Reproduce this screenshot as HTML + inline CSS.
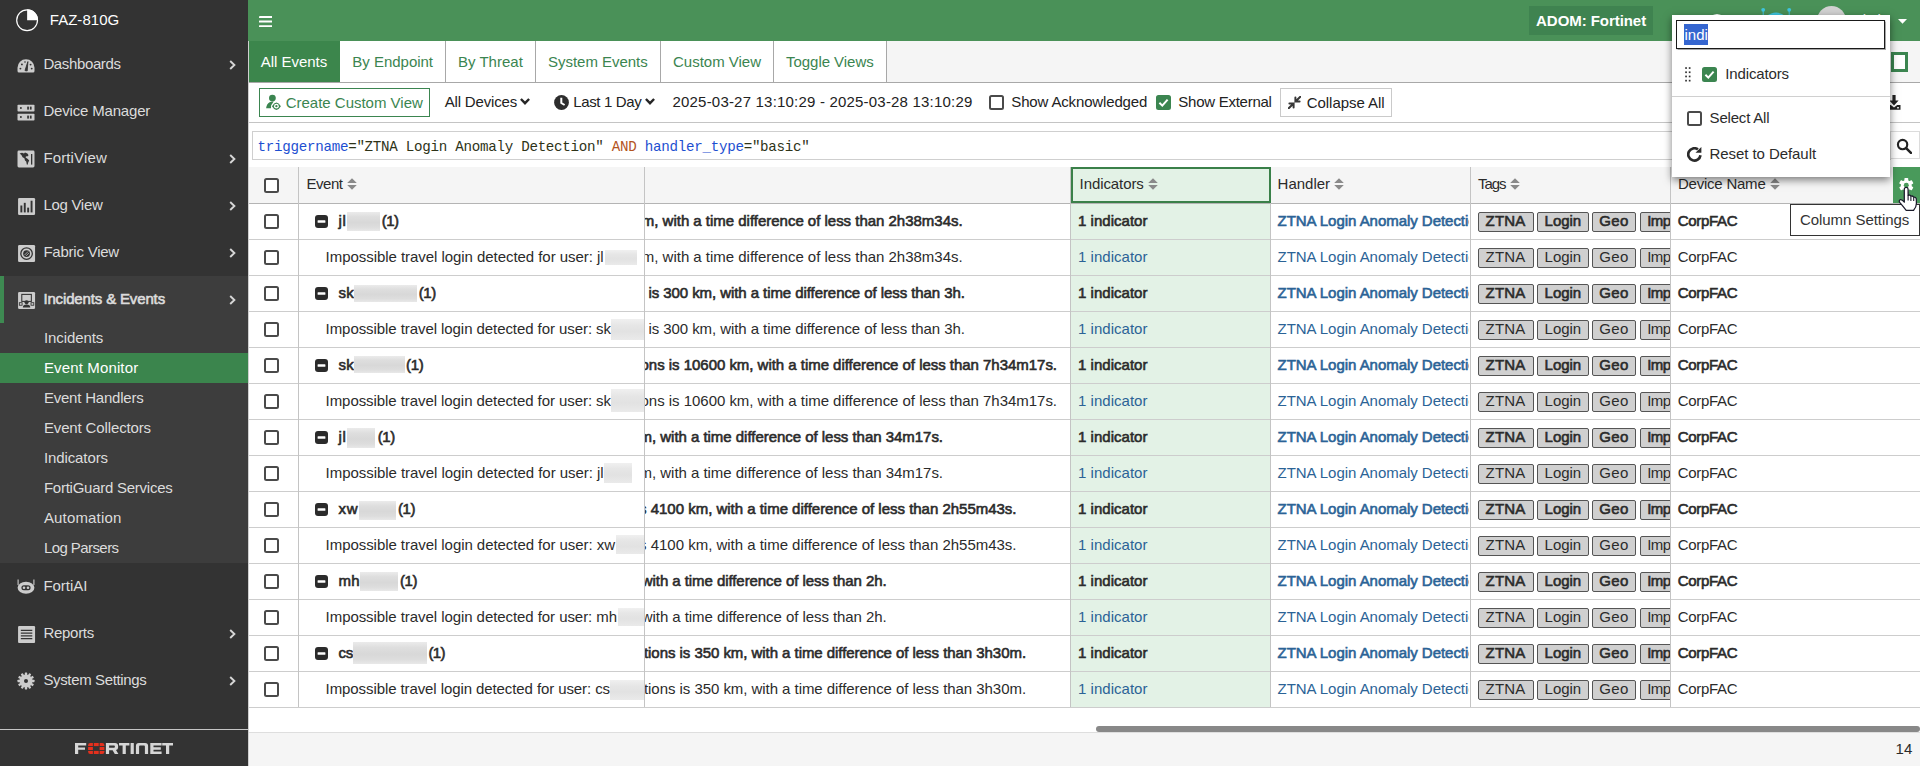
<!DOCTYPE html>
<html>
<head>
<meta charset="utf-8">
<title>FortiAnalyzer - Event Monitor</title>
<style>
*{box-sizing:border-box;}
html,body{margin:0;padding:0;}
body{width:1920px;height:766px;overflow:hidden;position:relative;background:#fff;
  font-family:"Liberation Sans",sans-serif;font-size:14px;color:#2b2b2b;}
.abs{position:absolute;}
/* ---------- sidebar ---------- */
#side{position:absolute;left:0;top:0;width:248px;height:766px;background:#333333;color:#d9d9d9;}
#side .brand{position:absolute;left:50px;top:11px;font-size:15px;color:#fff;letter-spacing:-0.2px;}
#side .mi{position:absolute;left:0;width:248px;height:47px;}
#side .mi .lbl{position:absolute;left:43px;top:14px;font-size:15px;color:#dcdcdc;white-space:nowrap;}
#side .mi .chev{position:absolute;left:228px;top:17px;width:8px;height:12px;}
#side .mi svg.ic{position:absolute;left:17px;top:15px;width:18px;height:18px;}
#side .sub{position:absolute;left:0;top:323px;width:248px;height:240px;background:#3d3d3d;}
#side .si{position:absolute;left:0;width:248px;height:30px;}
#side .si span{position:absolute;left:44px;top:6px;font-size:15px;color:#dcdcdc;white-space:nowrap;}
#side .si.act{background:#3b8550;}
#side .si.act span{color:#fff;}
#side .foot{position:absolute;left:0;top:729px;width:248px;height:37px;border-top:1px solid #5a5a5a;}
/* ---------- top bar ---------- */
#top{position:absolute;left:248px;top:0;width:1672px;height:41px;background:#4a9158;}
/* ---------- tabs ---------- */
#tabs{position:absolute;left:248px;top:41px;width:1672px;height:42px;background:#f5f5f5;border-bottom:1px solid #a8a8a8;}
/* ---------- toolbar ---------- */
#tb{position:absolute;left:248px;top:83px;width:1672px;height:40px;background:#fff;border-bottom:1px solid #c4c4c4;}
/* ---------- search ---------- */
#sr{position:absolute;left:248px;top:123px;width:1672px;height:45px;background:#fff;}
/* ---------- footer ---------- */
#ft{position:absolute;left:249px;top:732px;width:1671px;height:34px;background:#f5f5f5;border-top:1px solid #dedede;}

.tab{position:absolute;top:0;height:41px;line-height:41px;text-align:center;font-size:16px;color:#3b8550;background:#fff;border-right:1px solid #a8a8a8;white-space:nowrap;}
.tab.act{background:#3c864c;color:#fff;border-right:none;}
.t16{font-size:16px;white-space:nowrap;line-height:18px;}
.l15{font-size:15px;white-space:nowrap;line-height:18px;color:#222;}
.mono{font-family:"Liberation Mono",monospace;font-size:14.2px;letter-spacing:-0.275px;white-space:pre;line-height:16px;color:#2e3318;}
.cb{position:absolute;width:14px;height:14px;border:2px solid #4a4a4a;border-radius:2.5px;background:#fff;}
.cb.on{border-color:#3b8550;background:#3b8550;}
.cb svg{position:absolute;left:-2px;top:-2px;width:14px;height:14px;}

.tx{position:absolute;font-size:15px;line-height:18px;white-space:pre;color:#2b2b2b;}
.hl{position:absolute;left:249px;width:1671px;height:1px;background:#cdcdcd;}
.vl{position:absolute;top:167px;width:1px;height:540px;background:#c4c4c4;}
.cb2{position:absolute;width:15px;height:15px;border:2px solid #4a4a4a;border-radius:2.5px;background:#fff;}
.cb2.on{border-color:#3b8550;background:#3b8550;}
.cb2 svg{position:absolute;left:-2px;top:-2px;width:15px;height:15px;}
.blur{position:absolute;background:linear-gradient(#ebebeb,#dedede 25%,#d8d8d8 55%,#dddddd 80%,#e8e8e8);}
.blur.b2{background:linear-gradient(#f0f0f0,#e6e6e6 30%,#e2e2e2 60%,#eaeaea);}
.clip{position:absolute;overflow:hidden;}
.tag{position:absolute;top:8px;height:20px;border:1px solid #555;border-radius:2px;background:#d0d0d0;}
#pop{position:absolute;left:1671.5px;top:15px;width:218px;height:161.5px;background:#fff;box-shadow:0 3px 8px rgba(0,0,0,0.5);}
</style>
</head>
<body>
<div id="side">
<svg class="abs" style="left:15px;top:8px;width:24px;height:24px" viewBox="0 0 24 24"><circle cx="12.1" cy="12.2" r="10.4" fill="none" stroke="#fff" stroke-width="1.2"/><path d="M12.1 1.2 A11 11 0 0 1 23.1 12.2 L12.1 12.2 Z" fill="#fff"/></svg>
<span class="tx " style="left:49.8px;top:11px;letter-spacing:0.025px;color:#fff;">FAZ-810G</span>
<div class="abs" style="left:0;top:276px;width:248px;height:287px;background:#3d3d3d"></div>
<div class="abs" style="left:0;top:276px;width:4px;height:47px;background:#3e8a52"></div>
<div class="abs" style="left:0;top:353px;width:248px;height:30px;background:#3b854d"></div>
<svg class="abs" style="left:17px;top:41px;margin-top:16.5px;width:18px;height:15px" viewBox="0 0 18 15"><path d="M0.5 9.8 A8.5 8.5 0 0 1 17.5 9.8 L17.5 13 Q17.5 14.5 16 14.5 L2 14.5 Q0.5 14.5 0.5 13 Z" fill="#ccc"/><path d="M8 12.6 L10.9 3.6 L10.2 12.9 Z" fill="#333" stroke="#333" stroke-width="0.9" stroke-linejoin="round"/><circle cx="3.4" cy="10.6" r="0.95" fill="#333"/><circle cx="4.9" cy="6.4" r="0.95" fill="#333"/><circle cx="8" cy="4" r="0.8" fill="#333"/><circle cx="13.6" cy="6.6" r="0.95" fill="#333"/><circle cx="14.7" cy="10.6" r="0.95" fill="#333"/></svg>
<span class="tx " style="left:43.4px;top:55px;letter-spacing:-0.369px;color:#dcdcdc;">Dashboards</span>
<svg class="abs" style="left:229px;top:59.5px;width:7px;height:10px" viewBox="0 0 7 10"><path d="M1.2 1 L5.4 5 L1.2 9" fill="none" stroke="#d6d6d6" stroke-width="1.9"/></svg>
<svg class="abs" style="left:17px;top:88px;margin-top:15.5px;width:18px;height:18px" viewBox="0 0 18 18"><rect x="0.5" y="0.7" width="17" height="6.8" rx="0.8" fill="#ccc"/><rect x="0.5" y="9.7" width="17" height="6.8" rx="0.8" fill="#ccc"/><g fill="#333"><circle cx="3.9" cy="4.1" r="1"/><circle cx="3.9" cy="13.1" r="1"/><rect x="10.2" y="2.6" width="1.7" height="3"/><rect x="12.9" y="2.6" width="1.7" height="3"/><rect x="10.2" y="11.6" width="1.7" height="3"/><rect x="12.9" y="11.6" width="1.7" height="3"/></g></svg>
<span class="tx " style="left:43.4px;top:102px;letter-spacing:-0.173px;color:#dcdcdc;">Device Manager</span>
<svg class="abs" style="left:17px;top:135px;margin-top:15.3px;width:18px;height:18px" viewBox="0 0 18 18"><rect x="0.5" y="0.5" width="17" height="17" rx="1.4" fill="#ccc"/><path d="M2.6 3.6 L5 2.8 L7 3.4 L8 2.6 L10.4 3.4 L11.6 5.2 L10.2 6.6 L9 6.2 L8.6 7.6 L10.8 9 L12.2 10.6 L11.2 12.4 L10.6 14.8 L9.8 14.6 L9.2 11.6 L8 10.4 L7.4 8.2 L5.6 7.2 L4.4 5 Z" fill="#333"/><rect x="14" y="4" width="1.3" height="10.6" fill="#333"/></svg>
<span class="tx " style="left:43.4px;top:149px;letter-spacing:0.139px;color:#dcdcdc;">FortiView</span>
<svg class="abs" style="left:229px;top:153.5px;width:7px;height:10px" viewBox="0 0 7 10"><path d="M1.2 1 L5.4 5 L1.2 9" fill="none" stroke="#d6d6d6" stroke-width="1.9"/></svg>
<svg class="abs" style="left:16.94px;top:196.74px;width:19.125px;height:19.125px" viewBox="0 0 18 18"><rect x="1" y="1" width="16" height="16" rx="1.2" fill="#ccc"/><rect x="3.2" y="8" width="1.8" height="6.5" fill="#333"/><rect x="6.4" y="5.5" width="1.8" height="9" fill="#333"/><rect x="9.6" y="10" width="1.8" height="4.5" fill="#333"/><rect x="12.8" y="3.5" width="1.8" height="11" fill="#333"/></svg>
<span class="tx " style="left:43.4px;top:196px;letter-spacing:-0.292px;color:#dcdcdc;">Log View</span>
<svg class="abs" style="left:229px;top:200.5px;width:7px;height:10px" viewBox="0 0 7 10"><path d="M1.2 1 L5.4 5 L1.2 9" fill="none" stroke="#d6d6d6" stroke-width="1.9"/></svg>
<svg class="abs" style="left:16.94px;top:243.74px;width:19.125px;height:19.125px" viewBox="0 0 18 18"><rect x="1" y="1" width="16" height="16" rx="1.2" fill="#ccc"/><circle cx="9" cy="9" r="5.4" fill="none" stroke="#333" stroke-width="1.2"/><circle cx="9" cy="9" r="3.2" fill="#333"/><path d="M7 10.5 L10.5 7 M8.5 11.2 L11.2 8.5" stroke="#ccc" stroke-width="0.7"/></svg>
<span class="tx " style="left:43.4px;top:243px;letter-spacing:-0.227px;color:#dcdcdc;">Fabric View</span>
<svg class="abs" style="left:229px;top:247.5px;width:7px;height:10px" viewBox="0 0 7 10"><path d="M1.2 1 L5.4 5 L1.2 9" fill="none" stroke="#d6d6d6" stroke-width="1.9"/></svg>
<svg class="abs" style="left:16.94px;top:290.74px;width:19.125px;height:19.125px" viewBox="0 0 18 18"><rect x="1" y="1" width="16" height="16" rx="1.2" fill="#ccc"/><rect x="4.5" y="3.2" width="9" height="6.6" fill="none" stroke="#333" stroke-width="1"/><circle cx="9" cy="10.6" r="1.9" fill="#333"/><path d="M5.5 15.5 Q5.5 12.6 9 12.6 Q12.5 12.6 12.5 15.5 Z" fill="#333"/><rect x="2.2" y="11" width="2.6" height="2.4" fill="none" stroke="#333" stroke-width="0.8"/><rect x="13.2" y="11" width="2.6" height="2.4" fill="none" stroke="#333" stroke-width="0.8"/></svg>
<span class="tx " style="left:43.4px;top:290px;letter-spacing:-0.146px;color:#dcdcdc;-webkit-text-stroke:0.6px;">Incidents &amp; Events</span>
<svg class="abs" style="left:229px;top:294.5px;width:7px;height:10px" viewBox="0 0 7 10"><path d="M1.2 1 L5.4 5 L1.2 9" fill="none" stroke="#d6d6d6" stroke-width="1.9"/></svg>
<svg class="abs" style="left:17px;top:563px;margin-top:14px;width:18px;height:18px" viewBox="0 0 18 18"><path d="M1.1 2.4 L1.1 8 M16.9 2.4 L16.9 8" stroke="#ccc" stroke-width="1.1"/><ellipse cx="9" cy="10.8" rx="8.4" ry="6" fill="#ccc"/><rect x="4.4" y="8.3" width="9.2" height="5" rx="2.5" fill="#333"/><circle cx="7" cy="10.8" r="1.3" fill="#ccc"/><circle cx="11" cy="10.8" r="1.3" fill="#ccc"/></svg>
<span class="tx " style="left:43.4px;top:577px;letter-spacing:-0.012px;color:#dcdcdc;">FortiAI</span>
<svg class="abs" style="left:16.94px;top:624.74px;width:19.125px;height:19.125px" viewBox="0 0 18 18"><rect x="1" y="1" width="16" height="16" rx="1" fill="#ccc"/><path d="M3.6 5 H14.4 M3.6 7.6 H14.4 M3.6 10.2 H14.4 M3.6 12.8 H14.4" stroke="#333" stroke-width="1.1"/></svg>
<span class="tx " style="left:43.4px;top:624px;letter-spacing:-0.276px;color:#dcdcdc;">Reports</span>
<svg class="abs" style="left:229px;top:628.5px;width:7px;height:10px" viewBox="0 0 7 10"><path d="M1.2 1 L5.4 5 L1.2 9" fill="none" stroke="#d6d6d6" stroke-width="1.9"/></svg>
<svg class="abs" style="left:17px;top:657px;margin-top:15.3px;width:18px;height:18px" viewBox="0 0 18 18"><g fill="#ccc"><circle cx="9" cy="9" r="6.5"/><g><rect x="7.8" y="0.5" width="2.4" height="3" rx="0.4"/><rect x="7.8" y="14.5" width="2.4" height="3" rx="0.4"/></g><g transform="rotate(30 9 9)"><rect x="7.8" y="0.5" width="2.4" height="3" rx="0.4"/><rect x="7.8" y="14.5" width="2.4" height="3" rx="0.4"/></g><g transform="rotate(60 9 9)"><rect x="7.8" y="0.5" width="2.4" height="3" rx="0.4"/><rect x="7.8" y="14.5" width="2.4" height="3" rx="0.4"/></g><g transform="rotate(90 9 9)"><rect x="7.8" y="0.5" width="2.4" height="3" rx="0.4"/><rect x="7.8" y="14.5" width="2.4" height="3" rx="0.4"/></g><g transform="rotate(120 9 9)"><rect x="7.8" y="0.5" width="2.4" height="3" rx="0.4"/><rect x="7.8" y="14.5" width="2.4" height="3" rx="0.4"/></g><g transform="rotate(150 9 9)"><rect x="7.8" y="0.5" width="2.4" height="3" rx="0.4"/><rect x="7.8" y="14.5" width="2.4" height="3" rx="0.4"/></g></g><circle cx="9" cy="9" r="2" fill="#333"/></svg>
<span class="tx " style="left:43.4px;top:671px;letter-spacing:-0.353px;color:#dcdcdc;">System Settings</span>
<svg class="abs" style="left:229px;top:675.5px;width:7px;height:10px" viewBox="0 0 7 10"><path d="M1.2 1 L5.4 5 L1.2 9" fill="none" stroke="#d6d6d6" stroke-width="1.9"/></svg>
<span class="tx " style="left:43.9px;top:329px;letter-spacing:-0.072px;color:#dcdcdc;">Incidents</span>
<span class="tx " style="left:43.9px;top:359px;letter-spacing:0.143px;color:#fff;">Event Monitor</span>
<span class="tx " style="left:43.9px;top:389px;letter-spacing:-0.212px;color:#dcdcdc;">Event Handlers</span>
<span class="tx " style="left:43.9px;top:419px;letter-spacing:-0.132px;color:#dcdcdc;">Event Collectors</span>
<span class="tx " style="left:43.9px;top:449px;letter-spacing:-0.095px;color:#dcdcdc;">Indicators</span>
<span class="tx " style="left:43.9px;top:479px;letter-spacing:-0.251px;color:#dcdcdc;">FortiGuard Services</span>
<span class="tx " style="left:43.9px;top:509px;letter-spacing:0.171px;color:#dcdcdc;">Automation</span>
<span class="tx " style="left:43.9px;top:539px;letter-spacing:-0.570px;color:#dcdcdc;">Log Parsers</span>
<div class="abs" style="left:0;top:729px;width:248px;height:1px;background:#c6c6c6"></div>
<svg class="abs" style="left:74.9px;top:743px;width:98px;height:11px" viewBox="0 0 98 11"><g fill="#d6d6d6"><path d="M0 0 H11.2 V2.6 H3.2 V4.4 H10 V6.8 H3.2 V11 H0 Z"/><path fill-rule="evenodd" d="M30.9 0 H40 Q43.1 0 43.1 3 V4.4 Q43.1 6.6 41 6.9 L43.4 11 H39.8 L37.6 7.2 H34.1 V11 H30.9 Z M34.1 2.6 V4.7 H39 Q39.9 4.7 39.9 3.9 V3.4 Q39.9 2.6 39 2.6 Z"/><path d="M44 0 H54.4 V2.6 H50.8 V11 H47.6 V2.6 H44 Z"/><path d="M55.6 0 H58.8 V11 H55.6 Z"/><path d="M60.9 11 V3 Q60.9 0 63.9 0 H70.1 Q73.1 0 73.1 3 V11 H69.9 V3.5 Q69.9 2.6 69 2.6 H65 Q64.1 2.6 64.1 3.5 V11 Z"/><path d="M75.3 0 H86.6 V2.6 H78.5 V4.3 H85.8 V6.7 H78.5 V8.4 H86.6 V11 H75.3 Z"/><path d="M87.2 0 H98 V2.6 H94.2 V11 H91 V2.6 H87.2 Z"/></g><g fill="#e5301d"><path d="M15.3 0 H17.9 V3.1 H13.1 V2.2 Q13.1 0 15.3 0 Z"/><rect x="18.8" y="0" width="4.9" height="3.1"/><path d="M24.6 0 H27.2 Q29.4 0 29.4 2.2 V3.1 H24.6 Z"/><rect x="13.1" y="3.9" width="4.8" height="3.2"/><rect x="24.6" y="3.9" width="4.8" height="3.2"/><path d="M13.1 7.9 H17.9 V11 H15.3 Q13.1 11 13.1 8.8 Z"/><rect x="18.8" y="7.9" width="4.9" height="3.1"/><path d="M24.6 7.9 H29.4 V8.8 Q29.4 11 27.2 11 H24.6 Z"/></g></svg>
</div>
<div id="top"></div>
<svg class="abs" style="left:259px;top:15.9px;width:13.2px;height:11.2px" viewBox="0 0 13.2 11.2"><rect x="0" y="0" width="13.2" height="2" rx="0.5" fill="#fff"/><rect x="0" y="4.6" width="13.2" height="2" rx="0.5" fill="#fff"/><rect x="0" y="9.2" width="13.2" height="2" rx="0.5" fill="#fff"/></svg>
<div class="abs" style="left:1529px;top:6px;width:124px;height:29px;background:#3f8350"></div>
<span class="tx " style="left:1536.1px;top:12px;letter-spacing:-0.059px;font-weight:bold;color:#fff;">ADOM: Fortinet</span>
<svg class="abs" style="left:1706px;top:11.5px;width:22px;height:22px" viewBox="0 0 22 22"><circle cx="11" cy="11" r="8" fill="none" stroke="#fff" stroke-width="2"/></svg>
<svg class="abs" style="left:1756px;top:4px;width:40px;height:34px" viewBox="0 0 40 34"><g fill="#3ec6e0" stroke="#3ec6e0"><circle cx="7.2" cy="5.8" r="1.9" stroke="none"/><circle cx="33.2" cy="5.8" r="1.9" stroke="none"/><path d="M7.2 6 V16 M33.2 6 V16" stroke-width="1" fill="none"/><ellipse cx="20.2" cy="21" rx="13" ry="12.4" stroke="none"/></g></svg>
<div class="abs" style="left:1816.5px;top:5.5px;width:29px;height:29px;border-radius:50%;background:#d2d2d2"></div>
<span class="tx " style="left:1850.0px;top:11px;letter-spacing:-0.572px;color:#fff;">admin</span>
<svg class="abs" style="left:1897.5px;top:19px;width:9px;height:5px" viewBox="0 0 9 5"><path d="M0 0 H9 L4.5 4.8 Z" fill="#fff"/></svg>
<div id="tabs"></div>
<div class="abs" style="left:249px;top:41px;width:91px;height:41px;background:#3c864c"></div>
<div class="abs" style="left:445px;top:41px;width:1px;height:41px;background:#a8a8a8"></div>
<div class="abs" style="left:535px;top:41px;width:1px;height:41px;background:#a8a8a8"></div>
<div class="abs" style="left:660px;top:41px;width:1px;height:41px;background:#a8a8a8"></div>
<div class="abs" style="left:773px;top:41px;width:1px;height:41px;background:#a8a8a8"></div>
<div class="abs" style="left:886px;top:41px;width:1px;height:41px;background:#a8a8a8"></div>
<div class="abs" style="left:340px;top:41px;width:105px;height:41px;background:#fff"></div>
<div class="abs" style="left:446px;top:41px;width:89px;height:41px;background:#fff"></div>
<div class="abs" style="left:536px;top:41px;width:124px;height:41px;background:#fff"></div>
<div class="abs" style="left:661px;top:41px;width:112px;height:41px;background:#fff"></div>
<div class="abs" style="left:774px;top:41px;width:112px;height:41px;background:#fff"></div>
<span class="tx " style="left:260.7px;top:53px;letter-spacing:-0.020px;color:#fff;">All Events</span>
<span class="tx " style="left:352.3px;top:53px;letter-spacing:-0.017px;color:#3b8550;">By Endpoint</span>
<span class="tx " style="left:458.0px;top:53px;letter-spacing:0.015px;color:#3b8550;">By Threat</span>
<span class="tx " style="left:548.0px;top:53px;letter-spacing:-0.027px;color:#3b8550;">System Events</span>
<span class="tx " style="left:673.0px;top:53px;letter-spacing:-0.009px;color:#3b8550;">Custom View</span>
<span class="tx " style="left:786.0px;top:53px;letter-spacing:-0.035px;color:#3b8550;">Toggle Views</span>
<div class="abs" style="left:1891px;top:52px;width:17px;height:20px;border:3px solid #3b8550;background:#fff"></div>
<div id="tb"></div>
<div class="abs" style="left:259px;top:88px;width:171px;height:29px;border:1px solid #3b8550;background:#fff"></div>
<svg class="abs" style="left:265px;top:94px;width:17px;height:17px" viewBox="0 0 17 17"><circle cx="7.4" cy="4.1" r="3.4" fill="#3b8550"/><path d="M1.1 14.3 Q1.6 9.6 4.6 8.2 Q6.4 7.3 8.6 7.5 Q6.2 10.4 5.9 14.3 Z" fill="#3b8550"/><path d="M5.9 12.2 Q11.4 3.2 16.9 12.2 Q11.4 21.2 5.9 12.2 Z" fill="#fff"/><path d="M6.9 12.2 Q11.4 4.8 15.9 12.2 Q11.4 19.6 6.9 12.2 Z" fill="#3b8550"/><circle cx="11.4" cy="12.2" r="2.4" fill="#fff"/><circle cx="11.4" cy="12.2" r="1.15" fill="#3b8550"/></svg>
<span class="tx " style="left:285.7px;top:94px;letter-spacing:-0.010px;color:#3b8550;">Create Custom View</span>
<span class="tx " style="left:444.7px;top:93px;letter-spacing:-0.172px;color:#222;">All Devices</span>
<svg class="abs" style="left:519.5px;top:98px;width:10px;height:7px" viewBox="0 0 10 7"><path d="M0.9 1 L5 5.2 L9.1 1" fill="none" stroke="#262626" stroke-width="2.4"/></svg>
<svg class="abs" style="left:554px;top:95px;width:15px;height:15px" viewBox="0 0 15 15"><circle cx="7.5" cy="7.5" r="7.4" fill="#2d2d2d"/><path d="M7.3 2.8 V8 L10.6 10" fill="none" stroke="#fff" stroke-width="2"/></svg>
<span class="tx " style="left:573.3px;top:93px;letter-spacing:-0.372px;color:#222;">Last 1 Day</span>
<svg class="abs" style="left:644.5px;top:98px;width:10px;height:7px" viewBox="0 0 10 7"><path d="M0.9 1 L5 5.2 L9.1 1" fill="none" stroke="#262626" stroke-width="2.4"/></svg>
<span class="tx " style="left:672.5px;top:93px;letter-spacing:0.197px;color:#222;">2025-03-27 13:10:29 - 2025-03-28 13:10:29</span>
<div class="cb2" style="left:989px;top:95px"></div>
<span class="tx " style="left:1011.3px;top:93px;letter-spacing:-0.149px;color:#222;">Show Acknowledged</span>
<div class="cb2 on" style="left:1156px;top:95px"><svg viewBox="0 0 15 15"><path d="M3.4 7.8 L6.3 10.6 L11.6 4.6" fill="none" stroke="#fff" stroke-width="2"/></svg></div>
<span class="tx " style="left:1178.3px;top:93px;letter-spacing:-0.255px;color:#222;">Show External</span>
<div class="abs" style="left:1280px;top:88px;width:112px;height:29px;border:1px solid #cacaca;background:#fff"></div>
<svg class="abs" style="left:1288px;top:96px;width:13px;height:13px" viewBox="0 0 13 13"><path d="M12.4 0.6 L8 5 M7.4 1.4 V5.6 H11.6 M0.6 12.4 L5 8 M5.6 11.6 V7.4 H1.4" fill="none" stroke="#383838" stroke-width="2" stroke-linecap="round"/></svg>
<span class="tx " style="left:1306.7px;top:94px;letter-spacing:-0.033px;color:#222;">Collapse All</span>
<svg class="abs" style="left:1887px;top:95px;width:14px;height:15px" viewBox="0 0 14 15"><path d="M5.4 0 H8.6 V5.6 H11.6 L7 10.4 L2.4 5.6 H5.4 Z" fill="#222"/><path d="M0.5 9.9 H3.8 L7 12.6 L10.2 9.9 H13.5 V14.8 H0.5 Z" fill="#222"/><rect x="10" y="12.2" width="2" height="1.2" fill="#fff"/></svg>
<div class="abs" style="left:252px;top:131px;width:1639px;height:29px;border:1px solid #cfcfcf;background:#fff"></div>
<div class="abs mono" style="left:257.5px;top:138.5px"><span style="color:#1d4fd1">triggername</span>="ZTNA Login Anomaly Detection" <span style="color:#b3541e">AND</span> <span style="color:#1d4fd1">handler_type</span>="basic"</div>
<div class="abs" style="left:1890px;top:131px;width:30px;height:28px;border:1px solid #dcdcdc;background:#fff"></div>
<svg class="abs" style="left:1895.5px;top:137.5px;width:16.5px;height:16.5px" viewBox="0 0 17 17"><circle cx="6.8" cy="6.8" r="4.8" fill="none" stroke="#222" stroke-width="2.2"/><path d="M10.4 10.4 L15.4 15.4" stroke="#222" stroke-width="2.6" stroke-linecap="round"/></svg>
<div class="abs" style="left:248px;top:41px;width:1px;height:725px;background:#cfcfcf"></div>
<div id="tbl">
<div class="abs" style="left:249px;top:167px;width:1671px;height:36px;background:#f5f5f5"></div>
<div class="abs" style="left:1071px;top:204px;width:199px;height:503px;background:#e3f2e6"></div>
<div class="abs" style="left:249px;top:203px;width:1671px;height:1px;background:#b4b4b4"></div>
<div class="hl" style="top:239px"></div>
<div class="hl" style="top:275px"></div>
<div class="hl" style="top:311px"></div>
<div class="hl" style="top:347px"></div>
<div class="hl" style="top:383px"></div>
<div class="hl" style="top:419px"></div>
<div class="hl" style="top:455px"></div>
<div class="hl" style="top:491px"></div>
<div class="hl" style="top:527px"></div>
<div class="hl" style="top:563px"></div>
<div class="hl" style="top:599px"></div>
<div class="hl" style="top:635px"></div>
<div class="hl" style="top:671px"></div>
<div class="hl" style="top:707px"></div>
<div class="vl" style="left:298px"></div>
<div class="vl" style="left:644px"></div>
<div class="vl" style="left:1070px"></div>
<div class="vl" style="left:1270px"></div>
<div class="vl" style="left:1470px"></div>
<div class="vl" style="left:1670px"></div>
<div class="abs" style="left:1071px;top:167px;width:200px;height:36px;border:2px solid #3a8049;background:#e3f2e6"></div>
<div class="cb2" style="left:264px;top:178px"></div>
<span class="tx " style="left:306.4px;top:175px;letter-spacing:-0.432px;">Event</span>
<svg class="abs" style="left:347px;top:178px;width:10px;height:12px" viewBox="0 0 10 12"><path d="M5 0.2 L9.8 4.9 H0.2 Z M0.2 7 H9.8 L5 11.8 Z" fill="#8a8a8a"/></svg>
<span class="tx " style="left:1079.6px;top:175px;letter-spacing:-0.085px;">Indicators</span>
<svg class="abs" style="left:1148px;top:178px;width:10px;height:12px" viewBox="0 0 10 12"><path d="M5 0.2 L9.8 4.9 H0.2 Z M0.2 7 H9.8 L5 11.8 Z" fill="#8a8a8a"/></svg>
<span class="tx " style="left:1277.6px;top:175px;letter-spacing:-0.019px;">Handler</span>
<svg class="abs" style="left:1334px;top:178px;width:10px;height:12px" viewBox="0 0 10 12"><path d="M5 0.2 L9.8 4.9 H0.2 Z M0.2 7 H9.8 L5 11.8 Z" fill="#8a8a8a"/></svg>
<span class="tx " style="left:1478.0px;top:175px;letter-spacing:-1.022px;">Tags</span>
<svg class="abs" style="left:1510px;top:178px;width:10px;height:12px" viewBox="0 0 10 12"><path d="M5 0.2 L9.8 4.9 H0.2 Z M0.2 7 H9.8 L5 11.8 Z" fill="#8a8a8a"/></svg>
<span class="tx " style="left:1678.0px;top:175px;letter-spacing:-0.230px;">Device Name</span>
<svg class="abs" style="left:1770px;top:178px;width:10px;height:12px" viewBox="0 0 10 12"><path d="M5 0.2 L9.8 4.9 H0.2 Z M0.2 7 H9.8 L5 11.8 Z" fill="#8a8a8a"/></svg>
<div class="abs" style="left:1893px;top:167px;width:27px;height:36px;background:#499a5b"></div>
<svg class="abs" style="left:1899.1px;top:177.5px;width:14.6px;height:14.6px" viewBox="0 0 16 16"><g fill="#fff"><circle cx="8" cy="8" r="5.9"/><g><rect x="5.9" y="0.1" width="4.2" height="4" rx="0.7"/><rect x="5.9" y="11.9" width="4.2" height="4" rx="0.7"/></g><g transform="rotate(60 8 8)"><rect x="5.9" y="0.1" width="4.2" height="4" rx="0.7"/><rect x="5.9" y="11.9" width="4.2" height="4" rx="0.7"/></g><g transform="rotate(120 8 8)"><rect x="5.9" y="0.1" width="4.2" height="4" rx="0.7"/><rect x="5.9" y="11.9" width="4.2" height="4" rx="0.7"/></g></g><circle cx="8" cy="8" r="2.7" fill="#499a5b"/></svg>
<div class="cb2" style="left:264px;top:214px"></div>
<svg class="abs" style="left:315px;top:215px;width:13px;height:13px" viewBox="0 0 13 13"><rect width="13" height="13" rx="3" fill="#2b2b2b"/><rect x="2.6" y="5.2" width="7.8" height="2.6" rx="0.6" fill="#fff"/></svg>
<span class="tx " style="left:338.6px;top:212px;letter-spacing:0.600px;-webkit-text-stroke:0.6px;">jl</span>
<div class="blur" style="left:346.5px;top:212.2px;width:33.5px;height:18.8px"></div>
<span class="tx " style="left:381.8px;top:212px;letter-spacing:-0.515px;-webkit-text-stroke:0.6px;">(1)</span>
<div class="clip" style="left:645px;top:204px;width:425px;height:35px">
<span class="tx " style="right:107.4px;top:8px;-webkit-text-stroke:0.6px;letter-spacing:-0.016px;">m, with a time difference of less than 2h38m34s.</span>
</div>
<span class="tx " style="left:1078.0px;top:212px;letter-spacing:0.026px;-webkit-text-stroke:0.6px;">1 indicator</span>
<div class="clip" style="left:1271px;top:204px;width:198px;height:35px">
<span class="tx " style="left:6.5px;top:8px;-webkit-text-stroke:0.6px;color:#2b6396;letter-spacing:-0.037px;">ZTNA Login Anomaly Detection</span>
</div>
<div class="clip" style="left:1471px;top:204px;width:199px;height:35px">
<div class="tag" style="left:7.0px;width:55.5px"></div>
<span class="tx " style="left:14.6px;top:8px;letter-spacing:0.207px;-webkit-text-stroke:0.6px;">ZTNA</span>
<div class="tag" style="left:66.0px;width:51.5px"></div>
<span class="tx " style="left:73.6px;top:8px;letter-spacing:-0.061px;-webkit-text-stroke:0.6px;">Login</span>
<div class="tag" style="left:120.6px;width:44.6px"></div>
<span class="tx " style="left:128.2px;top:8px;letter-spacing:0.347px;-webkit-text-stroke:0.6px;">Geo</span>
<div class="tag" style="left:168.6px;width:81.4px"></div>
<span class="tx " style="left:176.2px;top:8px;letter-spacing:-0.590px;-webkit-text-stroke:0.6px;">Impossible</span>
</div>
<span class="tx " style="left:1677.8px;top:212px;letter-spacing:-0.312px;-webkit-text-stroke:0.6px;">CorpFAC</span>
<div class="cb2" style="left:264px;top:250px"></div>
<span class="tx " style="left:325.6px;top:248px;letter-spacing:-0.050px;">Impossible travel login detected for user: jl</span>
<div class="blur b2" style="left:604.5px;top:249.5px;width:32.3px;height:15.5px"></div>
<div class="clip" style="left:645px;top:240px;width:425px;height:35px">
<span class="tx " style="right:107.4px;top:8px;letter-spacing:-0.016px;">m, with a time difference of less than 2h38m34s.</span>
</div>
<span class="tx " style="left:1078.0px;top:248px;letter-spacing:0.026px;color:#2b6396;">1 indicator</span>
<div class="clip" style="left:1271px;top:240px;width:198px;height:35px">
<span class="tx " style="left:6.5px;top:8px;color:#2b6396;letter-spacing:-0.037px;">ZTNA Login Anomaly Detection</span>
</div>
<div class="clip" style="left:1471px;top:240px;width:199px;height:35px">
<div class="tag" style="left:7.0px;width:55.5px"></div>
<span class="tx " style="left:14.6px;top:8px;letter-spacing:0.207px;">ZTNA</span>
<div class="tag" style="left:66.0px;width:51.5px"></div>
<span class="tx " style="left:73.6px;top:8px;letter-spacing:-0.061px;">Login</span>
<div class="tag" style="left:120.6px;width:44.6px"></div>
<span class="tx " style="left:128.2px;top:8px;letter-spacing:0.347px;">Geo</span>
<div class="tag" style="left:168.6px;width:81.4px"></div>
<span class="tx " style="left:176.2px;top:8px;letter-spacing:-0.590px;">Impossible</span>
</div>
<span class="tx " style="left:1677.8px;top:248px;letter-spacing:-0.312px;">CorpFAC</span>
<div class="cb2" style="left:264px;top:286px"></div>
<svg class="abs" style="left:315px;top:287px;width:13px;height:13px" viewBox="0 0 13 13"><rect width="13" height="13" rx="3" fill="#2b2b2b"/><rect x="2.6" y="5.2" width="7.8" height="2.6" rx="0.6" fill="#fff"/></svg>
<span class="tx " style="left:338.6px;top:284px;letter-spacing:0.200px;-webkit-text-stroke:0.6px;">sk</span>
<div class="blur" style="left:354.0px;top:285.2px;width:63.2px;height:16.5px"></div>
<span class="tx " style="left:418.7px;top:284px;letter-spacing:-0.348px;-webkit-text-stroke:0.6px;">(1)</span>
<div class="clip" style="left:645px;top:276px;width:425px;height:35px">
<span class="tx " style="right:105.2px;top:8px;-webkit-text-stroke:0.6px;letter-spacing:-0.070px;"> is 300 km, with a time difference of less than 3h.</span>
</div>
<span class="tx " style="left:1078.0px;top:284px;letter-spacing:0.026px;-webkit-text-stroke:0.6px;">1 indicator</span>
<div class="clip" style="left:1271px;top:276px;width:198px;height:35px">
<span class="tx " style="left:6.5px;top:8px;-webkit-text-stroke:0.6px;color:#2b6396;letter-spacing:-0.037px;">ZTNA Login Anomaly Detection</span>
</div>
<div class="clip" style="left:1471px;top:276px;width:199px;height:35px">
<div class="tag" style="left:7.0px;width:55.5px"></div>
<span class="tx " style="left:14.6px;top:8px;letter-spacing:0.207px;-webkit-text-stroke:0.6px;">ZTNA</span>
<div class="tag" style="left:66.0px;width:51.5px"></div>
<span class="tx " style="left:73.6px;top:8px;letter-spacing:-0.061px;-webkit-text-stroke:0.6px;">Login</span>
<div class="tag" style="left:120.6px;width:44.6px"></div>
<span class="tx " style="left:128.2px;top:8px;letter-spacing:0.347px;-webkit-text-stroke:0.6px;">Geo</span>
<div class="tag" style="left:168.6px;width:81.4px"></div>
<span class="tx " style="left:176.2px;top:8px;letter-spacing:-0.590px;-webkit-text-stroke:0.6px;">Impossible</span>
</div>
<span class="tx " style="left:1677.8px;top:284px;letter-spacing:-0.312px;-webkit-text-stroke:0.6px;">CorpFAC</span>
<div class="cb2" style="left:264px;top:322px"></div>
<span class="tx " style="left:325.6px;top:320px;letter-spacing:-0.069px;">Impossible travel login detected for user: sk</span>
<div class="blur b2" style="left:610.8px;top:319.4px;width:33.2px;height:20.4px"></div>
<div class="clip" style="left:645px;top:312px;width:425px;height:35px">
<span class="tx " style="right:105.2px;top:8px;letter-spacing:-0.070px;"> is 300 km, with a time difference of less than 3h.</span>
</div>
<span class="tx " style="left:1078.0px;top:320px;letter-spacing:0.026px;color:#2b6396;">1 indicator</span>
<div class="clip" style="left:1271px;top:312px;width:198px;height:35px">
<span class="tx " style="left:6.5px;top:8px;color:#2b6396;letter-spacing:-0.037px;">ZTNA Login Anomaly Detection</span>
</div>
<div class="clip" style="left:1471px;top:312px;width:199px;height:35px">
<div class="tag" style="left:7.0px;width:55.5px"></div>
<span class="tx " style="left:14.6px;top:8px;letter-spacing:0.207px;">ZTNA</span>
<div class="tag" style="left:66.0px;width:51.5px"></div>
<span class="tx " style="left:73.6px;top:8px;letter-spacing:-0.061px;">Login</span>
<div class="tag" style="left:120.6px;width:44.6px"></div>
<span class="tx " style="left:128.2px;top:8px;letter-spacing:0.347px;">Geo</span>
<div class="tag" style="left:168.6px;width:81.4px"></div>
<span class="tx " style="left:176.2px;top:8px;letter-spacing:-0.590px;">Impossible</span>
</div>
<span class="tx " style="left:1677.8px;top:320px;letter-spacing:-0.312px;">CorpFAC</span>
<div class="cb2" style="left:264px;top:358px"></div>
<svg class="abs" style="left:315px;top:359px;width:13px;height:13px" viewBox="0 0 13 13"><rect width="13" height="13" rx="3" fill="#2b2b2b"/><rect x="2.6" y="5.2" width="7.8" height="2.6" rx="0.6" fill="#fff"/></svg>
<span class="tx " style="left:338.6px;top:356px;letter-spacing:0.200px;-webkit-text-stroke:0.6px;">sk</span>
<div class="blur" style="left:354.0px;top:356.0px;width:50.7px;height:17.0px"></div>
<span class="tx " style="left:406.0px;top:356px;letter-spacing:-0.281px;-webkit-text-stroke:0.6px;">(1)</span>
<div class="clip" style="left:645px;top:348px;width:425px;height:35px">
<span class="tx " style="right:13.0px;top:8px;-webkit-text-stroke:0.6px;letter-spacing:-0.030px;">ons is 10600 km, with a time difference of less than 7h34m17s.</span>
</div>
<span class="tx " style="left:1078.0px;top:356px;letter-spacing:0.026px;-webkit-text-stroke:0.6px;">1 indicator</span>
<div class="clip" style="left:1271px;top:348px;width:198px;height:35px">
<span class="tx " style="left:6.5px;top:8px;-webkit-text-stroke:0.6px;color:#2b6396;letter-spacing:-0.037px;">ZTNA Login Anomaly Detection</span>
</div>
<div class="clip" style="left:1471px;top:348px;width:199px;height:35px">
<div class="tag" style="left:7.0px;width:55.5px"></div>
<span class="tx " style="left:14.6px;top:8px;letter-spacing:0.207px;-webkit-text-stroke:0.6px;">ZTNA</span>
<div class="tag" style="left:66.0px;width:51.5px"></div>
<span class="tx " style="left:73.6px;top:8px;letter-spacing:-0.061px;-webkit-text-stroke:0.6px;">Login</span>
<div class="tag" style="left:120.6px;width:44.6px"></div>
<span class="tx " style="left:128.2px;top:8px;letter-spacing:0.347px;-webkit-text-stroke:0.6px;">Geo</span>
<div class="tag" style="left:168.6px;width:81.4px"></div>
<span class="tx " style="left:176.2px;top:8px;letter-spacing:-0.590px;-webkit-text-stroke:0.6px;">Impossible</span>
</div>
<span class="tx " style="left:1677.8px;top:356px;letter-spacing:-0.312px;-webkit-text-stroke:0.6px;">CorpFAC</span>
<div class="cb2" style="left:264px;top:394px"></div>
<span class="tx " style="left:325.6px;top:392px;letter-spacing:-0.069px;">Impossible travel login detected for user: sk</span>
<div class="blur b2" style="left:610.8px;top:388.6px;width:33.2px;height:23.1px"></div>
<div class="clip" style="left:645px;top:384px;width:425px;height:35px">
<span class="tx " style="right:13.0px;top:8px;letter-spacing:-0.030px;">ons is 10600 km, with a time difference of less than 7h34m17s.</span>
</div>
<span class="tx " style="left:1078.0px;top:392px;letter-spacing:0.026px;color:#2b6396;">1 indicator</span>
<div class="clip" style="left:1271px;top:384px;width:198px;height:35px">
<span class="tx " style="left:6.5px;top:8px;color:#2b6396;letter-spacing:-0.037px;">ZTNA Login Anomaly Detection</span>
</div>
<div class="clip" style="left:1471px;top:384px;width:199px;height:35px">
<div class="tag" style="left:7.0px;width:55.5px"></div>
<span class="tx " style="left:14.6px;top:8px;letter-spacing:0.207px;">ZTNA</span>
<div class="tag" style="left:66.0px;width:51.5px"></div>
<span class="tx " style="left:73.6px;top:8px;letter-spacing:-0.061px;">Login</span>
<div class="tag" style="left:120.6px;width:44.6px"></div>
<span class="tx " style="left:128.2px;top:8px;letter-spacing:0.347px;">Geo</span>
<div class="tag" style="left:168.6px;width:81.4px"></div>
<span class="tx " style="left:176.2px;top:8px;letter-spacing:-0.590px;">Impossible</span>
</div>
<span class="tx " style="left:1677.8px;top:392px;letter-spacing:-0.312px;">CorpFAC</span>
<div class="cb2" style="left:264px;top:430px"></div>
<svg class="abs" style="left:315px;top:431px;width:13px;height:13px" viewBox="0 0 13 13"><rect width="13" height="13" rx="3" fill="#2b2b2b"/><rect x="2.6" y="5.2" width="7.8" height="2.6" rx="0.6" fill="#fff"/></svg>
<span class="tx " style="left:338.6px;top:428px;letter-spacing:0.600px;-webkit-text-stroke:0.6px;">jl</span>
<div class="blur" style="left:346.5px;top:427.7px;width:28.5px;height:20.3px"></div>
<span class="tx " style="left:377.7px;top:428px;letter-spacing:-0.448px;-webkit-text-stroke:0.6px;">(1)</span>
<div class="clip" style="left:645px;top:420px;width:425px;height:35px">
<span class="tx " style="right:127.0px;top:8px;-webkit-text-stroke:0.6px;letter-spacing:-0.031px;">m, with a time difference of less than 34m17s.</span>
</div>
<span class="tx " style="left:1078.0px;top:428px;letter-spacing:0.026px;-webkit-text-stroke:0.6px;">1 indicator</span>
<div class="clip" style="left:1271px;top:420px;width:198px;height:35px">
<span class="tx " style="left:6.5px;top:8px;-webkit-text-stroke:0.6px;color:#2b6396;letter-spacing:-0.037px;">ZTNA Login Anomaly Detection</span>
</div>
<div class="clip" style="left:1471px;top:420px;width:199px;height:35px">
<div class="tag" style="left:7.0px;width:55.5px"></div>
<span class="tx " style="left:14.6px;top:8px;letter-spacing:0.207px;-webkit-text-stroke:0.6px;">ZTNA</span>
<div class="tag" style="left:66.0px;width:51.5px"></div>
<span class="tx " style="left:73.6px;top:8px;letter-spacing:-0.061px;-webkit-text-stroke:0.6px;">Login</span>
<div class="tag" style="left:120.6px;width:44.6px"></div>
<span class="tx " style="left:128.2px;top:8px;letter-spacing:0.347px;-webkit-text-stroke:0.6px;">Geo</span>
<div class="tag" style="left:168.6px;width:81.4px"></div>
<span class="tx " style="left:176.2px;top:8px;letter-spacing:-0.590px;-webkit-text-stroke:0.6px;">Impossible</span>
</div>
<span class="tx " style="left:1677.8px;top:428px;letter-spacing:-0.312px;-webkit-text-stroke:0.6px;">CorpFAC</span>
<div class="cb2" style="left:264px;top:466px"></div>
<span class="tx " style="left:325.6px;top:464px;letter-spacing:-0.050px;">Impossible travel login detected for user: jl</span>
<div class="blur b2" style="left:603.8px;top:463.3px;width:28.4px;height:19.7px"></div>
<div class="clip" style="left:645px;top:456px;width:425px;height:35px">
<span class="tx " style="right:127.0px;top:8px;letter-spacing:-0.031px;">m, with a time difference of less than 34m17s.</span>
</div>
<span class="tx " style="left:1078.0px;top:464px;letter-spacing:0.026px;color:#2b6396;">1 indicator</span>
<div class="clip" style="left:1271px;top:456px;width:198px;height:35px">
<span class="tx " style="left:6.5px;top:8px;color:#2b6396;letter-spacing:-0.037px;">ZTNA Login Anomaly Detection</span>
</div>
<div class="clip" style="left:1471px;top:456px;width:199px;height:35px">
<div class="tag" style="left:7.0px;width:55.5px"></div>
<span class="tx " style="left:14.6px;top:8px;letter-spacing:0.207px;">ZTNA</span>
<div class="tag" style="left:66.0px;width:51.5px"></div>
<span class="tx " style="left:73.6px;top:8px;letter-spacing:-0.061px;">Login</span>
<div class="tag" style="left:120.6px;width:44.6px"></div>
<span class="tx " style="left:128.2px;top:8px;letter-spacing:0.347px;">Geo</span>
<div class="tag" style="left:168.6px;width:81.4px"></div>
<span class="tx " style="left:176.2px;top:8px;letter-spacing:-0.590px;">Impossible</span>
</div>
<span class="tx " style="left:1677.8px;top:464px;letter-spacing:-0.312px;">CorpFAC</span>
<div class="cb2" style="left:264px;top:502px"></div>
<svg class="abs" style="left:315px;top:503px;width:13px;height:13px" viewBox="0 0 13 13"><rect width="13" height="13" rx="3" fill="#2b2b2b"/><rect x="2.6" y="5.2" width="7.8" height="2.6" rx="0.6" fill="#fff"/></svg>
<span class="tx " style="left:338.6px;top:500px;letter-spacing:0.600px;-webkit-text-stroke:0.6px;">xw</span>
<div class="blur" style="left:359.0px;top:501.0px;width:36.9px;height:18.5px"></div>
<span class="tx " style="left:398.0px;top:500px;letter-spacing:-0.448px;-webkit-text-stroke:0.6px;">(1)</span>
<div class="clip" style="left:645px;top:492px;width:425px;height:35px">
<span class="tx " style="right:53.5px;top:8px;-webkit-text-stroke:0.6px;letter-spacing:-0.015px;">s 4100 km, with a time difference of less than 2h55m43s.</span>
</div>
<span class="tx " style="left:1078.0px;top:500px;letter-spacing:0.026px;-webkit-text-stroke:0.6px;">1 indicator</span>
<div class="clip" style="left:1271px;top:492px;width:198px;height:35px">
<span class="tx " style="left:6.5px;top:8px;-webkit-text-stroke:0.6px;color:#2b6396;letter-spacing:-0.037px;">ZTNA Login Anomaly Detection</span>
</div>
<div class="clip" style="left:1471px;top:492px;width:199px;height:35px">
<div class="tag" style="left:7.0px;width:55.5px"></div>
<span class="tx " style="left:14.6px;top:8px;letter-spacing:0.207px;-webkit-text-stroke:0.6px;">ZTNA</span>
<div class="tag" style="left:66.0px;width:51.5px"></div>
<span class="tx " style="left:73.6px;top:8px;letter-spacing:-0.061px;-webkit-text-stroke:0.6px;">Login</span>
<div class="tag" style="left:120.6px;width:44.6px"></div>
<span class="tx " style="left:128.2px;top:8px;letter-spacing:0.347px;-webkit-text-stroke:0.6px;">Geo</span>
<div class="tag" style="left:168.6px;width:81.4px"></div>
<span class="tx " style="left:176.2px;top:8px;letter-spacing:-0.590px;-webkit-text-stroke:0.6px;">Impossible</span>
</div>
<span class="tx " style="left:1677.8px;top:500px;letter-spacing:-0.312px;-webkit-text-stroke:0.6px;">CorpFAC</span>
<div class="cb2" style="left:264px;top:538px"></div>
<span class="tx " style="left:325.6px;top:536px;letter-spacing:-0.054px;">Impossible travel login detected for user: xw</span>
<div class="blur b2" style="left:615.7px;top:535.1px;width:28.3px;height:19.2px"></div>
<div class="clip" style="left:645px;top:528px;width:425px;height:35px">
<span class="tx " style="right:53.5px;top:8px;letter-spacing:-0.015px;">s 4100 km, with a time difference of less than 2h55m43s.</span>
</div>
<span class="tx " style="left:1078.0px;top:536px;letter-spacing:0.026px;color:#2b6396;">1 indicator</span>
<div class="clip" style="left:1271px;top:528px;width:198px;height:35px">
<span class="tx " style="left:6.5px;top:8px;color:#2b6396;letter-spacing:-0.037px;">ZTNA Login Anomaly Detection</span>
</div>
<div class="clip" style="left:1471px;top:528px;width:199px;height:35px">
<div class="tag" style="left:7.0px;width:55.5px"></div>
<span class="tx " style="left:14.6px;top:8px;letter-spacing:0.207px;">ZTNA</span>
<div class="tag" style="left:66.0px;width:51.5px"></div>
<span class="tx " style="left:73.6px;top:8px;letter-spacing:-0.061px;">Login</span>
<div class="tag" style="left:120.6px;width:44.6px"></div>
<span class="tx " style="left:128.2px;top:8px;letter-spacing:0.347px;">Geo</span>
<div class="tag" style="left:168.6px;width:81.4px"></div>
<span class="tx " style="left:176.2px;top:8px;letter-spacing:-0.590px;">Impossible</span>
</div>
<span class="tx " style="left:1677.8px;top:536px;letter-spacing:-0.312px;">CorpFAC</span>
<div class="cb2" style="left:264px;top:574px"></div>
<svg class="abs" style="left:315px;top:575px;width:13px;height:13px" viewBox="0 0 13 13"><rect width="13" height="13" rx="3" fill="#2b2b2b"/><rect x="2.6" y="5.2" width="7.8" height="2.6" rx="0.6" fill="#fff"/></svg>
<span class="tx " style="left:338.6px;top:572px;letter-spacing:0.178px;-webkit-text-stroke:0.6px;">mh</span>
<div class="blur" style="left:360.3px;top:571.8px;width:37.5px;height:19.1px"></div>
<span class="tx " style="left:400.0px;top:572px;letter-spacing:-0.448px;-webkit-text-stroke:0.6px;">(1)</span>
<div class="clip" style="left:645px;top:564px;width:425px;height:35px">
<span class="tx " style="right:183.4px;top:8px;-webkit-text-stroke:0.6px;letter-spacing:-0.066px;">with a time difference of less than 2h.</span>
</div>
<span class="tx " style="left:1078.0px;top:572px;letter-spacing:0.026px;-webkit-text-stroke:0.6px;">1 indicator</span>
<div class="clip" style="left:1271px;top:564px;width:198px;height:35px">
<span class="tx " style="left:6.5px;top:8px;-webkit-text-stroke:0.6px;color:#2b6396;letter-spacing:-0.037px;">ZTNA Login Anomaly Detection</span>
</div>
<div class="clip" style="left:1471px;top:564px;width:199px;height:35px">
<div class="tag" style="left:7.0px;width:55.5px"></div>
<span class="tx " style="left:14.6px;top:8px;letter-spacing:0.207px;-webkit-text-stroke:0.6px;">ZTNA</span>
<div class="tag" style="left:66.0px;width:51.5px"></div>
<span class="tx " style="left:73.6px;top:8px;letter-spacing:-0.061px;-webkit-text-stroke:0.6px;">Login</span>
<div class="tag" style="left:120.6px;width:44.6px"></div>
<span class="tx " style="left:128.2px;top:8px;letter-spacing:0.347px;-webkit-text-stroke:0.6px;">Geo</span>
<div class="tag" style="left:168.6px;width:81.4px"></div>
<span class="tx " style="left:176.2px;top:8px;letter-spacing:-0.590px;-webkit-text-stroke:0.6px;">Impossible</span>
</div>
<span class="tx " style="left:1677.8px;top:572px;letter-spacing:-0.312px;-webkit-text-stroke:0.6px;">CorpFAC</span>
<div class="cb2" style="left:264px;top:610px"></div>
<span class="tx " style="left:325.6px;top:608px;letter-spacing:-0.065px;">Impossible travel login detected for user: mh</span>
<div class="blur b2" style="left:618.0px;top:607.7px;width:26.0px;height:18.1px"></div>
<div class="clip" style="left:645px;top:600px;width:425px;height:35px">
<span class="tx " style="right:183.4px;top:8px;letter-spacing:-0.066px;">with a time difference of less than 2h.</span>
</div>
<span class="tx " style="left:1078.0px;top:608px;letter-spacing:0.026px;color:#2b6396;">1 indicator</span>
<div class="clip" style="left:1271px;top:600px;width:198px;height:35px">
<span class="tx " style="left:6.5px;top:8px;color:#2b6396;letter-spacing:-0.037px;">ZTNA Login Anomaly Detection</span>
</div>
<div class="clip" style="left:1471px;top:600px;width:199px;height:35px">
<div class="tag" style="left:7.0px;width:55.5px"></div>
<span class="tx " style="left:14.6px;top:8px;letter-spacing:0.207px;">ZTNA</span>
<div class="tag" style="left:66.0px;width:51.5px"></div>
<span class="tx " style="left:73.6px;top:8px;letter-spacing:-0.061px;">Login</span>
<div class="tag" style="left:120.6px;width:44.6px"></div>
<span class="tx " style="left:128.2px;top:8px;letter-spacing:0.347px;">Geo</span>
<div class="tag" style="left:168.6px;width:81.4px"></div>
<span class="tx " style="left:176.2px;top:8px;letter-spacing:-0.590px;">Impossible</span>
</div>
<span class="tx " style="left:1677.8px;top:608px;letter-spacing:-0.312px;">CorpFAC</span>
<div class="cb2" style="left:264px;top:646px"></div>
<svg class="abs" style="left:315px;top:647px;width:13px;height:13px" viewBox="0 0 13 13"><rect width="13" height="13" rx="3" fill="#2b2b2b"/><rect x="2.6" y="5.2" width="7.8" height="2.6" rx="0.6" fill="#fff"/></svg>
<span class="tx " style="left:338.6px;top:644px;letter-spacing:-0.300px;-webkit-text-stroke:0.6px;">cs</span>
<div class="blur" style="left:353.0px;top:641.9px;width:74.0px;height:22.0px"></div>
<span class="tx " style="left:428.4px;top:644px;letter-spacing:-0.581px;-webkit-text-stroke:0.6px;">(1)</span>
<div class="clip" style="left:645px;top:636px;width:425px;height:35px">
<span class="tx " style="right:44.0px;top:8px;-webkit-text-stroke:0.6px;letter-spacing:-0.049px;">tions is 350 km, with a time difference of less than 3h30m.</span>
</div>
<span class="tx " style="left:1078.0px;top:644px;letter-spacing:0.026px;-webkit-text-stroke:0.6px;">1 indicator</span>
<div class="clip" style="left:1271px;top:636px;width:198px;height:35px">
<span class="tx " style="left:6.5px;top:8px;-webkit-text-stroke:0.6px;color:#2b6396;letter-spacing:-0.037px;">ZTNA Login Anomaly Detection</span>
</div>
<div class="clip" style="left:1471px;top:636px;width:199px;height:35px">
<div class="tag" style="left:7.0px;width:55.5px"></div>
<span class="tx " style="left:14.6px;top:8px;letter-spacing:0.207px;-webkit-text-stroke:0.6px;">ZTNA</span>
<div class="tag" style="left:66.0px;width:51.5px"></div>
<span class="tx " style="left:73.6px;top:8px;letter-spacing:-0.061px;-webkit-text-stroke:0.6px;">Login</span>
<div class="tag" style="left:120.6px;width:44.6px"></div>
<span class="tx " style="left:128.2px;top:8px;letter-spacing:0.347px;-webkit-text-stroke:0.6px;">Geo</span>
<div class="tag" style="left:168.6px;width:81.4px"></div>
<span class="tx " style="left:176.2px;top:8px;letter-spacing:-0.590px;-webkit-text-stroke:0.6px;">Impossible</span>
</div>
<span class="tx " style="left:1677.8px;top:644px;letter-spacing:-0.312px;-webkit-text-stroke:0.6px;">CorpFAC</span>
<div class="cb2" style="left:264px;top:682px"></div>
<span class="tx " style="left:325.6px;top:680px;letter-spacing:-0.091px;">Impossible travel login detected for user: cs</span>
<div class="blur b2" style="left:610.4px;top:680.2px;width:33.6px;height:19.8px"></div>
<div class="clip" style="left:645px;top:672px;width:425px;height:35px">
<span class="tx " style="right:44.0px;top:8px;letter-spacing:-0.049px;">tions is 350 km, with a time difference of less than 3h30m.</span>
</div>
<span class="tx " style="left:1078.0px;top:680px;letter-spacing:0.026px;color:#2b6396;">1 indicator</span>
<div class="clip" style="left:1271px;top:672px;width:198px;height:35px">
<span class="tx " style="left:6.5px;top:8px;color:#2b6396;letter-spacing:-0.037px;">ZTNA Login Anomaly Detection</span>
</div>
<div class="clip" style="left:1471px;top:672px;width:199px;height:35px">
<div class="tag" style="left:7.0px;width:55.5px"></div>
<span class="tx " style="left:14.6px;top:8px;letter-spacing:0.207px;">ZTNA</span>
<div class="tag" style="left:66.0px;width:51.5px"></div>
<span class="tx " style="left:73.6px;top:8px;letter-spacing:-0.061px;">Login</span>
<div class="tag" style="left:120.6px;width:44.6px"></div>
<span class="tx " style="left:128.2px;top:8px;letter-spacing:0.347px;">Geo</span>
<div class="tag" style="left:168.6px;width:81.4px"></div>
<span class="tx " style="left:176.2px;top:8px;letter-spacing:-0.590px;">Impossible</span>
</div>
<span class="tx " style="left:1677.8px;top:680px;letter-spacing:-0.312px;">CorpFAC</span>
</div>
<div class="abs" style="left:1096px;top:726px;width:824px;height:6px;border-radius:3px;background:#888888"></div>
<div id="ft"><span class="tx" style="right:7.5px;top:7px;letter-spacing:0.2px">14</span></div>

<div id="pop">
  <div class="abs" style="left:4.5px;top:5px;width:209px;height:29px;border:1px solid #1a1a1a;background:#fff;box-shadow:0 0 1px 0.5px rgba(0,0,0,0.35)"></div>
  <div class="abs" style="left:12.5px;top:9px;width:24px;height:20.5px;background:#3566d0"></div>
  <div class="abs" style="left:13px;top:10.5px;font-size:15px;line-height:18px;color:#fff">indi</div>
  <svg class="abs" style="left:13.5px;top:52px;width:6px;height:15px" viewBox="0 0 6 15"><g fill="#333"><rect x="0.2" y="0.2" width="1.7" height="1.7"/><rect x="3.8" y="0.2" width="1.7" height="1.7"/><rect x="0.2" y="4.4" width="1.7" height="1.7"/><rect x="3.8" y="4.4" width="1.7" height="1.7"/><rect x="0.2" y="8.6" width="1.7" height="1.7"/><rect x="3.8" y="8.6" width="1.7" height="1.7"/><rect x="0.2" y="12.8" width="1.7" height="1.7"/><rect x="3.8" y="12.8" width="1.7" height="1.7"/></g></svg>
  <div class="cb2 on" style="left:30.5px;top:52px"><svg viewBox="0 0 15 15"><path d="M3.4 7.8 L6.3 10.6 L11.6 4.6" fill="none" stroke="#fff" stroke-width="2"/></svg></div>
  <span class="tx " style="left:53.8px;top:50px;letter-spacing:-0.145px;">Indicators</span>
  <div class="abs" style="left:0;top:81px;width:218px;height:1px;background:#d0d0d0"></div>
  <div class="cb2" style="left:15.5px;top:96px"></div>
  <span class="tx " style="left:38.1px;top:94px;letter-spacing:-0.190px;">Select All</span>
  <svg class="abs" style="left:15.5px;top:132px;width:15px;height:15px" viewBox="0 0 15 15"><path d="M13.49 8.3 A6.15 6.15 0 1 1 10.93 2.36" fill="none" stroke="#2b2b2b" stroke-width="2.7"/><path d="M8.5 5.7 L14.4 5.7 L14.4 -0.1 Z" fill="#2b2b2b"/></svg>
  <span class="tx " style="left:38.1px;top:130px;letter-spacing:-0.073px;">Reset to Default</span>
</div>

<div class="abs" style="left:1790px;top:204px;width:130px;height:32px;border:1px solid #333;background:#fff"></div>
<span class="tx " style="left:1800.0px;top:211px;letter-spacing:-0.057px;color:#333;">Column Settings</span>

<svg class="abs" style="left:1897px;top:186px;width:22px;height:26px" viewBox="0 0 22 26"><path d="M7.3 3.2 Q7.3 1.4 9.2 1.4 Q11.1 1.4 11.1 3.2 L11.1 9.4 Q13 8.4 13.9 10.3 Q15.8 9.4 16.7 11.3 Q18.8 10.8 19.3 12.9 L19.4 17.6 Q19.3 21.6 16.6 24.3 L9.2 24.3 Q6.4 20.8 2.7 16.4 Q1.5 14.6 3.2 13.7 Q4.9 13.3 7.3 16.2 Z" fill="#fff" stroke="#1b1b2b" stroke-width="1.25" stroke-linejoin="round"/><path d="M11.1 9.6 V14.6 M13.9 10.5 V14.9 M16.7 11.5 V15.1" stroke="#1b1b2b" stroke-width="1.1" fill="none"/></svg>

</body>
</html>
